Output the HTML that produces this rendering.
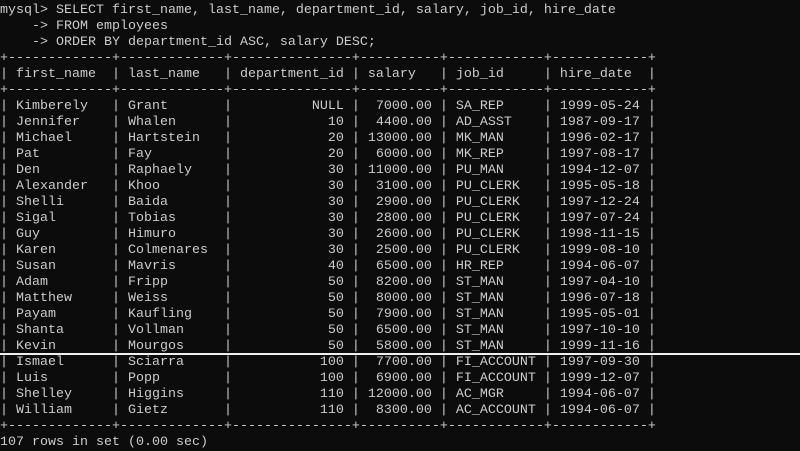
<!DOCTYPE html>
<html><head><meta charset="utf-8"><style>
html,body{margin:0;padding:0;background:#0c0c0c;width:800px;height:450px;overflow:hidden}
pre{margin:0;position:absolute;left:0;top:3px;font-family:"Liberation Mono",monospace;font-size:13.33px;line-height:16px;color:#cccccc;white-space:pre}
.w{position:absolute;left:0;top:353px;width:800px;height:2px;background:#f0f0f0}
</style></head><body>
<pre>mysql&gt; SELECT first_name, last_name, department_id, salary, job_id, hire_date
    -&gt; FROM employees
    -&gt; ORDER BY department_id ASC, salary DESC;
+-------------+-------------+---------------+----------+------------+------------+
| first_name  | last_name   | department_id | salary   | job_id     | hire_date  |
+-------------+-------------+---------------+----------+------------+------------+
| Kimberely   | Grant       |          NULL |  7000.00 | SA_REP     | 1999-05-24 |
| Jennifer    | Whalen      |            10 |  4400.00 | AD_ASST    | 1987-09-17 |
| Michael     | Hartstein   |            20 | 13000.00 | MK_MAN     | 1996-02-17 |
| Pat         | Fay         |            20 |  6000.00 | MK_REP     | 1997-08-17 |
| Den         | Raphaely    |            30 | 11000.00 | PU_MAN     | 1994-12-07 |
| Alexander   | Khoo        |            30 |  3100.00 | PU_CLERK   | 1995-05-18 |
| Shelli      | Baida       |            30 |  2900.00 | PU_CLERK   | 1997-12-24 |
| Sigal       | Tobias      |            30 |  2800.00 | PU_CLERK   | 1997-07-24 |
| Guy         | Himuro      |            30 |  2600.00 | PU_CLERK   | 1998-11-15 |
| Karen       | Colmenares  |            30 |  2500.00 | PU_CLERK   | 1999-08-10 |
| Susan       | Mavris      |            40 |  6500.00 | HR_REP     | 1994-06-07 |
| Adam        | Fripp       |            50 |  8200.00 | ST_MAN     | 1997-04-10 |
| Matthew     | Weiss       |            50 |  8000.00 | ST_MAN     | 1996-07-18 |
| Payam       | Kaufling    |            50 |  7900.00 | ST_MAN     | 1995-05-01 |
| Shanta      | Vollman     |            50 |  6500.00 | ST_MAN     | 1997-10-10 |
| Kevin       | Mourgos     |            50 |  5800.00 | ST_MAN     | 1999-11-16 |
| Ismael      | Sciarra     |           100 |  7700.00 | FI_ACCOUNT | 1997-09-30 |
| Luis        | Popp        |           100 |  6900.00 | FI_ACCOUNT | 1999-12-07 |
| Shelley     | Higgins     |           110 | 12000.00 | AC_MGR     | 1994-06-07 |
| William     | Gietz       |           110 |  8300.00 | AC_ACCOUNT | 1994-06-07 |
+-------------+-------------+---------------+----------+------------+------------+
107 rows in set (0.00 sec)</pre>
<div class="w"></div>
</body></html>
